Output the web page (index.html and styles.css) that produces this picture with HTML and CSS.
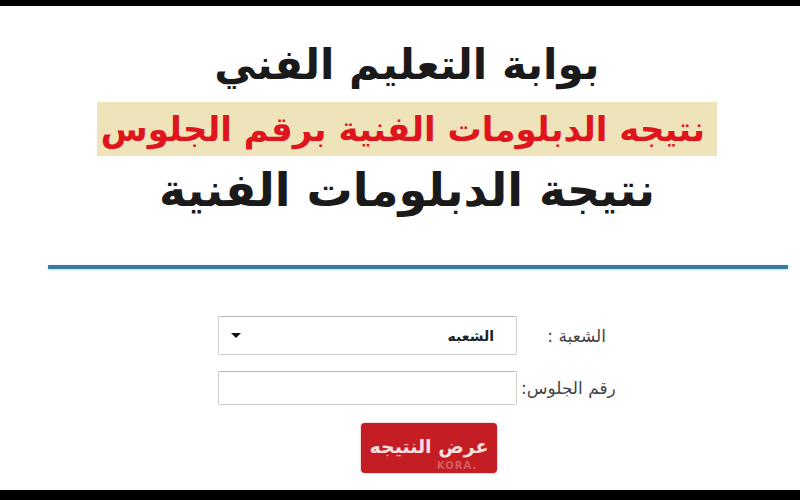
FILE: index.html
```html
<!DOCTYPE html>
<html lang="ar" dir="rtl">
<head>
<meta charset="utf-8">
<link rel="stylesheet" href="styles.css">
</head>
<body>
<div class="page">
  <div class="bar-top"></div>
  <main class="content">
    <h1 class="title-main">بوابة التعليم الفني</h1>
    <div class="band"><span class="band-text">نتيجه الدبلومات الفنية برقم الجلوس</span></div>
    <h2 class="title-sub">نتيجة الدبلومات الفنية</h2>
    <div class="rule"></div>
    <form class="form">
      <div class="row">
        <label class="label">الشعبة :</label>
        <div class="select"><span class="select-text">الشعبه</span><span class="caret"></span></div>
      </div>
      <div class="row row-input">
        <label class="label label-seat">رقم الجلوس:</label>
        <div class="input"></div>
      </div>
      <div class="row-btn">
        <div class="btn"><span class="btn-text">عرض النتيجه</span><span class="watermark">KORA.</span></div>
      </div>
    </form>
  </main>
  <div class="bar-bottom"></div>
</div>
</body>
</html>
```
FILE: styles.css
```css
html, body {
  margin: 0;
  padding: 0;
  background: #fff;
}
body {
  font-family: "DejaVu Sans", "Noto Sans", sans-serif;
}
.page {
  width: 800px;
  height: 500px;
  display: flex;
  flex-direction: column;
  overflow: hidden;
  direction: ltr;
}
.bar-top {
  height: 6px;
  background: #000;
  flex: none;
}
.bar-bottom {
  height: 10px;
  background: #000;
  flex: none;
}
.content {
  flex: 1;
  display: flex;
  flex-direction: column;
  align-items: flex-start;
}
.title-main {
  margin: 28px 0 0 0;
  padding-left: 14px;
  width: 786px;
  text-align: center;
  font-size: 42px;
  line-height: 62px;
  height: 62px;
  font-weight: bold;
  color: #1a1a1a;
  direction: rtl;
}
.band {
  margin: 6px 0 0 97px;
  width: 620px;
  height: 54px;
  background: #efe3b9;
  display: flex;
  align-items: center;
  justify-content: flex-end;
}
.band-text {
  color: #e0141c;
  font-size: 34px;
  font-weight: bold;
  padding-right: 12px;
  line-height: 54px;
  white-space: nowrap;
  direction: rtl;
}
.title-sub {
  margin: 4px 0 0 0;
  padding-left: 14px;
  width: 786px;
  text-align: center;
  font-size: 46px;
  line-height: 60px;
  height: 60px;
  font-weight: bold;
  color: #1a1a1a;
  direction: rtl;
}
.rule {
  margin: 45px 0 0 48px;
  width: 740px;
  height: 4px;
  background: #3a7d9e;
  box-shadow: 0 1px 3px rgba(120, 200, 230, 0.6);
}
.form {
  margin: 47px 0 0 218px;
  width: 400px;
  display: flex;
  flex-direction: column;
}
.row {
  display: flex;
  align-items: center;
  height: 39px;
}
.row-input {
  margin-top: 16px;
  height: 34px;
}
.select, .input {
  width: 299px;
  flex: none;
  height: 100%;
  box-sizing: border-box;
  border: 1px solid #cfcfcf;
  border-top-color: #b8b8b8;
  border-radius: 2px;
  background: #fff;
  display: flex;
  flex-direction: row-reverse;
  align-items: center;
  justify-content: space-between;
  padding: 0 22px 0 12px;
}
.select { order: 1; }
.input { order: 1; }
.label {
  order: 2;
  flex: 1;
  font-size: 17px;
  color: #444;
  padding: 0 12px 0 4px;
  box-sizing: border-box;
  white-space: nowrap;
  direction: rtl;
  text-align: right;
}
.label-seat {
  padding-right: 4px;
}
.select-text {
  font-size: 14px;
  font-weight: bold;
  color: #222;
  direction: rtl;
}
.caret {
  width: 0;
  height: 0;
  border-left: 5px solid transparent;
  border-right: 5px solid transparent;
  border-top: 5px solid #111;
}
.row-btn {
  display: flex;
  justify-content: flex-start;
  margin-top: 18px;
  padding-left: 143px;
}
.btn {
  width: 136px;
  height: 50px;
  background: #c41e24;
  border-radius: 4px;
  display: flex;
  align-items: center;
  justify-content: center;
  position: relative;
  box-shadow: 0 0 2px rgba(200, 30, 40, 0.5);
}
.btn-text {
  color: #f7dede;
  font-size: 19px;
  line-height: 24px;
  font-weight: bold;
  direction: rtl;
  margin-top: -4px;
}
.watermark {
  position: absolute;
  left: 76px;
  top: 37px;
  font-size: 10px;
  line-height: 12px;
  font-weight: bold;
  color: rgba(255, 255, 255, 0.28);
  letter-spacing: 1px;
}
```
